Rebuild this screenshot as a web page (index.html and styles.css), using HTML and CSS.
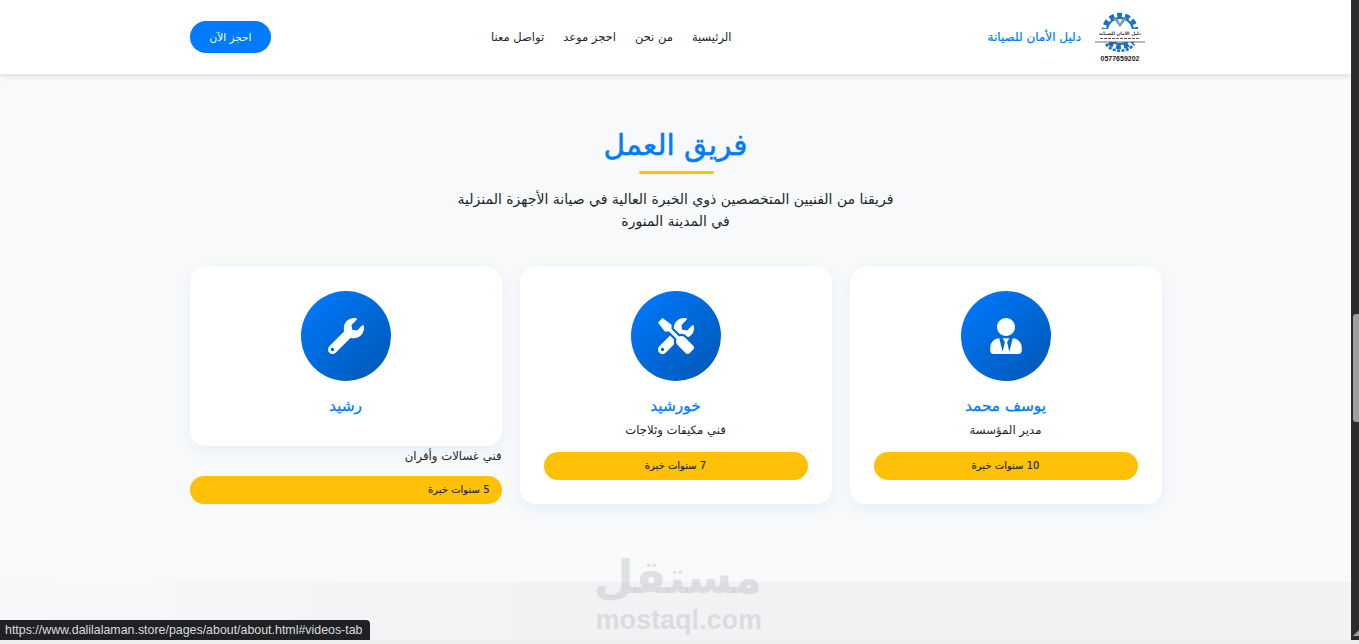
FILE: index.html
```html
<!DOCTYPE html>
<html lang="ar" dir="rtl">
<head>
    <meta charset="UTF-8">
    <meta name="viewport" content="width=device-width, initial-scale=1.0">
    <title>دليل الأمان للصيانة</title>
    <link rel="stylesheet" href="styles.css">
</head>
<body>
<div class="page">
    <header class="topbar">
        <div class="topbar-inner">
            <a class="brand" href="#">
                <svg class="brand-logo" viewBox="0 0 52 52" aria-hidden="true">
                    <circle cx="26" cy="20" r="16" fill="none" stroke="#1a6fc4" stroke-width="4.5" stroke-dasharray="5 3"/>
                    <circle cx="26" cy="20" r="13" fill="none" stroke="#1a6fc4" stroke-width="2"/>
                    <path d="M20 7l6 8 6-8M23 8l3 6 3-6" fill="none" stroke="#7f9db8" stroke-width="1.6"/>
                    <rect x="0" y="18" width="52" height="13" fill="#fff"/>
                    <text class="brand-mini" x="26" y="24" text-anchor="middle">دليل الأمان للصيانة</text>
                    <path d="M6 27.5h40" stroke="#555" stroke-width="1.2" stroke-dasharray="3 1"/>
                    <path d="M1 31h50" stroke="#333" stroke-width=".7"/>
                    <path d="M12 33c6 9 22 9 28 0" fill="none" stroke="#1a6fc4" stroke-width="2.6" stroke-dasharray="3 1.4"/>
                    <text class="brand-phone" x="26" y="50" text-anchor="middle">0577659202</text>
                </svg>
                <span class="brand-name">دليل الأمان للصيانة</span>
            </a>
            <nav class="nav">
                <a href="#">الرئيسية</a>
                <a href="#">من نحن</a>
                <a href="#">احجز موعد</a>
                <a href="#">تواصل معنا</a>
            </nav>
            <a class="book-btn" href="#">احجز الآن</a>
        </div>
    </header>

    <main class="team">
        <h1 class="team-title">فريق العمل</h1>
        <p class="team-sub">فريقنا من الفنيين المتخصصين ذوي الخبرة العالية في صيانة الأجهزة المنزلية في المدينة المنورة</p>
        <div class="team-grid">
            <div class="member">
                <div class="avatar">
                    <svg viewBox="0 0 448 512" class="avatar-icon"><path d="M224 256c70.7 0 128-57.3 128-128S294.7 0 224 0 96 57.3 96 128s57.3 128 128 128zm95.8 32.6L272 480l-32-136 32-56h-96l32 56-32 136-47.8-191.4C56.9 292 0 350.3 0 422.4V464c0 26.5 21.5 48 48 48h352c26.5 0 48-21.5 48-48v-41.6c0-72.1-56.9-130.4-128.2-133.8z"/></svg>
                </div>
                <h3 class="member-name">يوسف محمد</h3>
                <p class="member-role">مدير المؤسسة</p>
                <div class="member-exp">10 سنوات خبرة</div>
            </div>
            <div class="member">
                <div class="avatar">
                    <svg viewBox="0 0 512 512" class="avatar-icon"><path d="M501.1 395.7L384 278.6c-23.1-23.1-57.6-27.6-85.4-13.9L192 158.1V96L64 0 0 64l96 128h62.1l106.6 106.6c-13.6 27.8-9.2 62.3 13.9 85.4l117.1 117.1c14.6 14.6 38.2 14.6 52.7 0l52.7-52.7c14.5-14.6 14.5-38.2 0-52.7zM331.7 225c28.3 0 54.9 11 74.9 31l19.4 19.4c15.8-6.9 30.8-16.5 43.8-29.5 37.1-37.1 49.7-89.3 37.9-136.7-2.2-9-13.5-12.1-20.1-5.5l-74.4 74.4-67.9-11.3L334 98.9l74.4-74.4c6.6-6.6 3.4-17.9-5.7-20.2-47.4-11.7-99.6.9-136.6 37.9-28.5 28.5-41.9 66.1-41.2 103.6l82.1 82.1c8.1-1.9 16.5-2.9 24.7-2.9zm-103.9 82l-56.7-56.7L18.7 402.8c-25 25-25 65.5 0 90.5s65.5 25 90.5 0l123.6-123.6c-7.6-19.9-9.9-41.6-5-62.7zM64 472c-13.2 0-24-10.8-24-24 0-13.3 10.7-24 24-24s24 10.7 24 24c0 13.2-10.7 24-24 24z"/></svg>
                </div>
                <h3 class="member-name">خورشيد</h3>
                <p class="member-role">فني مكيفات وثلاجات</p>
                <div class="member-exp">7 سنوات خبرة</div>
            </div>
            <div class="member member-short">
                <div class="member-head">
                    <div class="avatar">
                        <svg viewBox="0 0 512 512" class="avatar-icon"><path d="M507.73 109.1c-2.24-9.03-13.54-12.09-20.12-5.51l-74.36 74.36-67.88-11.31-11.31-67.88 74.36-74.36c6.62-6.62 3.43-17.9-5.66-20.16-47.38-11.74-99.55.91-136.58 37.93-39.64 39.64-50.55 97.1-34.05 147.2L18.74 402.76c-24.99 24.99-24.99 65.51 0 90.5 24.99 24.99 65.51 24.99 90.5 0l213.21-213.21c50.12 16.71 107.47 5.68 147.37-34.22 37.07-37.07 49.7-89.32 37.91-136.73zM64 472c-13.25 0-24-10.75-24-24 0-13.26 10.75-24 24-24s24 10.74 24 24c0 13.25-10.75 24-24 24z"/></svg>
                    </div>
                    <h3 class="member-name">رشيد</h3>
                </div>
                <p class="member-role">فني غسالات وأفران</p>
                <div class="member-exp">5 سنوات خبرة</div>
            </div>
        </div>
    </main>

    <div class="strip"></div>
</div>

<div class="scrollbar"><span class="scroll-thumb"></span><span class="scroll-arrow"></span></div>

<div class="watermark">
    <span class="watermark-ar">مستقل</span>
    <span class="watermark-en">mostaql.com</span>
</div>
<div class="status-url" dir="ltr">https://www.dalilalaman.store/pages/about/about.html#videos-tab</div>
</body>
</html>
```

FILE: styles.css
```css
* {
    box-sizing: border-box;
}

body {
    margin: 0;
    height: 644px;
    overflow: hidden;
    display: flex;
    flex-direction: row-reverse;
    align-items: flex-start;
    background: #eeeeef;
    color: #212529;
    font-family: "DejaVu Sans", "Noto Sans", sans-serif;
    font-size: 12px;
}

.page {
    flex: 1;
    display: flex;
    flex-direction: column;
    height: 640px;
    background: #f8f9fa;
}

.topbar {
    height: 74px;
    background: #fff;
    box-shadow: 0 2px 6px rgba(0, 0, 0, 0.12);
}

.topbar-inner {
    width: 972px;
    height: 100%;
    margin-right: 189px;
    padding-right: 16px;
    display: flex;
    align-items: center;
}

.brand {
    display: flex;
    align-items: center;
    gap: 13px;
    text-decoration: none;
}

.brand-logo {
    width: 52px;
    height: 52px;
    display: block;
}

.brand-mini {
    font-size: 4.5px;
    font-weight: bold;
    fill: #333;
}

.brand-phone {
    font-family: "Liberation Sans", sans-serif;
    font-size: 7px;
    font-weight: bold;
    fill: #222;
}

.brand-name {
    color: #007bff;
    font-size: 12px;
    white-space: nowrap;
    -webkit-text-stroke: 0.2px #007bff;
}

.nav {
    display: flex;
    gap: 19px;
    margin-right: 256px;
    font-size: 11.5px;
}

.nav a {
    color: #212529;
    text-decoration: none;
    white-space: nowrap;
}

.book-btn {
    margin-right: auto;
    width: 81px;
    height: 32px;
    border-radius: 16px;
    background: #007bff;
    color: #fff;
    font-size: 10.5px;
    text-decoration: none;
    display: flex;
    align-items: center;
    justify-content: center;
}

.team {
    flex: 1;
    padding-top: 50px;
    display: flex;
    flex-direction: column;
    align-items: center;
}

.team-title {
    margin: 0;
    color: #007bff;
    font-size: 29.6px;
    font-weight: normal;
    -webkit-text-stroke: 0.5px #007bff;
    line-height: 42px;
    position: relative;
    padding-bottom: 8px;
}

.team-title::after {
    content: "";
    position: absolute;
    left: 50%;
    bottom: 0;
    width: 75px;
    height: 3px;
    margin-left: -37px;
    border-radius: 2px;
    background: #ffc107;
}

.team-sub {
    margin: 14px 0 0;
    width: 455px;
    font-size: 14px;
    line-height: 22px;
    text-align: center;
}

.team-grid {
    width: 972px;
    margin-top: 35px;
    display: grid;
    grid-template-columns: repeat(3, 312px);
    gap: 18px;
    height: 237px;
}

.member {
    background: #fff;
    border-radius: 15px;
    padding: 24px;
    box-shadow: 0 5px 15px rgba(0, 123, 255, 0.08);
    text-align: center;
}

.member-short {
    background: none;
    box-shadow: none;
    padding: 0;
    text-align: right;
}

.member-head {
    height: 179px;
    padding: 24px;
    background: #fff;
    border-radius: 15px;
    box-shadow: 0 5px 15px rgba(0, 123, 255, 0.08);
    text-align: center;
}

.avatar {
    width: 90px;
    height: 90px;
    margin: 0 auto;
    border-radius: 50%;
    background: linear-gradient(135deg, #007bff, #0056b3);
    display: flex;
    align-items: center;
    justify-content: center;
}

.avatar-icon {
    width: 36px;
    height: 36px;
    fill: #fff;
}

.member-name {
    margin: 14px 0 0;
    color: #007bff;
    font-size: 15.4px;
    font-weight: normal;
    -webkit-text-stroke: 0.3px #007bff;
    line-height: 22px;
}

.member-role {
    margin: 3px 0 0;
    font-size: 11.7px;
    line-height: 20px;
}

.member-exp {
    margin-top: 12px;
    height: 28px;
    border-radius: 14px;
    background: #ffc107;
    font-size: 10px;
    -webkit-text-stroke: 0.15px #212529;
    line-height: 28px;
    text-align: center;
}

.member-short .member-role {
    margin-top: 0;
}

.member-short .member-exp {
    margin-top: 10px;
    text-align: right;
    padding-right: 12px;
}

.strip {
    height: 58px;
    background: linear-gradient(to right, #f7f8f9, #f1f2f4 40%);
}

.scrollbar {
    width: 8px;
    height: 640px;
    background: #2c2c2c;
    position: relative;
}

.scroll-thumb {
    position: absolute;
    top: 314px;
    right: 0;
    width: 6px;
    height: 108px;
    border-radius: 3px 0 0 3px;
    background: #9f9f9f;
}

.scroll-arrow {
    position: absolute;
    right: 0;
    bottom: 4px;
    border-style: solid;
    border-width: 0 0 6px 6px;
    border-color: transparent transparent #9f9f9f transparent;
}

.watermark {
    position: absolute;
    left: 597px;
    top: 548px;
    width: 165px;
    color: rgba(150, 155, 160, 0.26);
    text-align: center;
    pointer-events: none;
}

.watermark-ar {
    display: block;
    font-size: 46px;
    font-weight: bold;
    line-height: 58px;
}

.watermark-en {
    display: block;
    font-family: "Liberation Sans", sans-serif;
    font-size: 27px;
    line-height: 28px;
    font-weight: bold;
}

.status-url {
    position: absolute;
    left: 0;
    top: 620px;
    width: 370px;
    height: 20px;
    padding-left: 5px;
    background: #202124;
    border-radius: 0 4px 0 0;
    color: #dcdcdc;
    font-family: "Liberation Sans", sans-serif;
    font-size: 12.4px;
    line-height: 20px;
    white-space: nowrap;
}
```
